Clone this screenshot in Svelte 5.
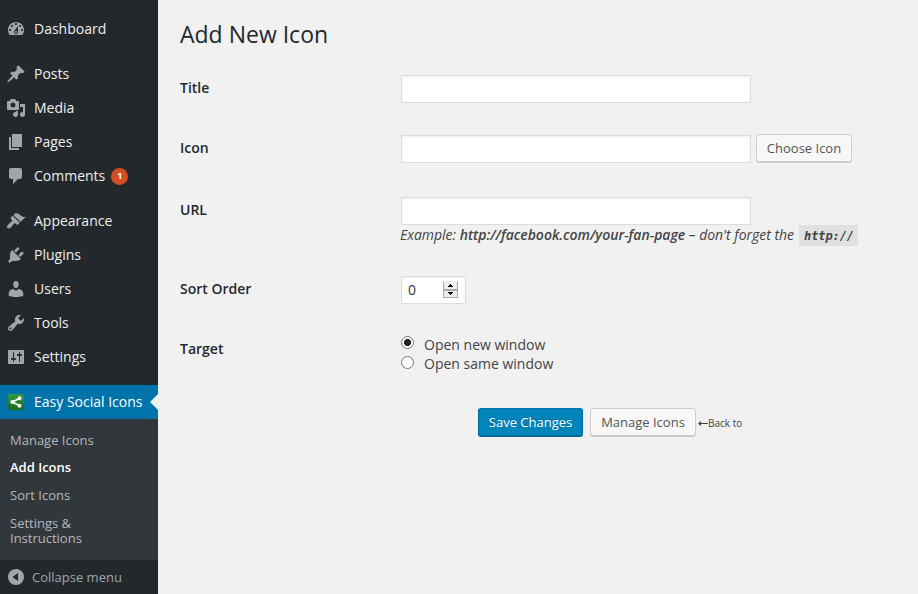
<script>
  const groups = [
    [
      { label: 'Dashboard', d: 'M3.76 16h12.48c1.09-1.37 1.76-3.11 1.76-5 0-4.42-3.58-8-8-8s-8 3.58-8 8c0 1.89.67 3.63 1.76 5zM10 4c.55 0 1 .45 1 1s-.45 1-1 1-1-.45-1-1 .45-1 1-1zM6 6c.55 0 1 .45 1 1s-.45 1-1 1-1-.45-1-1 .45-1 1-1zm8 0c.55 0 1 .45 1 1s-.45 1-1 1-1-.45-1-1 .45-1 1-1zm-5.37 5.55L12 7v6c0 1.1-.9 2-2 2s-2-.9-2-2c0-.57.24-1.08.63-1.45zM4 10c.55 0 1 .45 1 1s-.45 1-1 1-1-.45-1-1 .45-1 1-1zm12 0c.55 0 1 .45 1 1s-.45 1-1 1-1-.45-1-1 .45-1 1-1zm-5 3c0-.55-.45-1-1-1s-1 .45-1 1 .45 1 1 1 1-.45 1-1z' }
    ],
    [
      { label: 'Posts', d: 'M10.44 3.02l1.82-1.82 6.36 6.35-1.83 1.82c-1.05-.68-2.48-.57-3.41.36l-.75.75c-.92.93-1.04 2.35-.35 3.41l-1.83 1.82-2.41-2.41-2.8 2.79c-.42.42-3.38 2.71-3.8 2.29s1.86-3.39 2.28-3.81l2.79-2.79L4.1 9.36l1.83-1.82c1.05.69 2.48.57 3.4-.36l.75-.75c.93-.92 1.05-2.35.36-3.41z' },
      { label: 'Media', d: 'M13 11V4c0-.55-.45-1-1-1h-1.67L9 1H5L3.67 3H2c-.55 0-1 .45-1 1v7c0 .55.45 1 1 1h10c.55 0 1-.45 1-1zM7 4.5c1.38 0 2.5 1.12 2.5 2.5S8.38 9.5 7 9.5 4.5 8.38 4.5 7 5.62 4.5 7 4.5zM14 6h5v10.5c0 1.38-1.12 2.5-2.5 2.5S14 17.88 14 16.5s1.12-2.5 2.5-2.5c.17 0 .34.02.5.05V9h-3V6zm-4 8.05V13h2v3.5c0 1.38-1.12 2.5-2.5 2.5S7 17.88 7 16.5 8.12 14 9.5 14c.17 0 .34.02.5.05z' },
      { label: 'Pages', d: 'M6 15V2h10v13H6zm-1 1h8v2H3V5h2v11z' },
      { label: 'Comments', count: 1, d: 'M5 2h9c1.1 0 2 .9 2 2v7c0 1.1-.9 2-2 2h-2l-5 5v-5H5c-1.1 0-2-.9-2-2V4c0-1.1.9-2 2-2z' }
    ],
    [
      { label: 'Appearance', d: 'M14.48 11.06L7.41 3.99l1.5-1.5c.5-.56 2.3-.47 3.51.32 1.21.8 1.43 1.28 2.91 2.1 1.18.64 2.45 1.26 4.45.85zm-.71.71L6.7 4.7 4.93 6.47c-.39.39-.39 1.02 0 1.41l1.06 1.06c.39.39.39 1.03 0 1.42-.6.6-1.43 1.11-2.21 1.69-.35.26-.7.53-1.01.84C1.43 14.23.4 16.08 1.4 17.07c.99 1 2.84-.03 4.18-1.36.31-.31.58-.66.85-1.02.57-.78 1.08-1.61 1.69-2.21.39-.39 1.02-.39 1.41 0l1.06 1.06c.39.39 1.02.39 1.41 0z' },
      { label: 'Plugins', d: 'M13.11 4.36L9.87 7.6 8 5.73l3.24-3.24c.35-.34 1.05-.2 1.56.32.52.51.66 1.21.31 1.55zm-8 1.77l.91-1.12 9.01 9.01-1.19.84c-.71.71-2.63 1.16-3.82 1.16H6.14L4.9 17.26c-.59.59-1.54.59-2.12 0-.59-.58-.59-1.53 0-2.12l1.24-1.24v-3.88c0-1.13.4-3.19 1.09-3.89zm7.26 3.97l3.24-3.24c.34-.35 1.04-.21 1.55.31.52.51.66 1.21.31 1.55l-3.24 3.25z' },
      { label: 'Users', d: 'M10 9.25c-2.27 0-2.73-3.44-2.73-3.44C7 4.02 7.82 2 9.97 2c2.16 0 2.98 2.02 2.71 3.81 0 0-.41 3.44-2.68 3.44zm0 2.57L12.72 10c2.39 0 4.52 2.33 4.52 4.53v2.49s-3.65 1.13-7.24 1.13c-3.65 0-7.24-1.13-7.24-1.13v-2.49c0-2.25 1.94-4.48 4.47-4.48z' },
      { label: 'Tools', d: 'M16.68 9.77c-1.34 1.34-3.3 1.67-4.95.99l-5.41 6.52c-.99.99-2.59.99-3.58 0s-.99-2.59 0-3.57l6.52-5.42c-.68-1.65-.35-3.61.99-4.95 1.28-1.28 3.12-1.62 4.72-1.06l-2.89 2.89 2.82 2.82 2.86-2.87c.53 1.58.18 3.39-1.08 4.65zM3.81 16.21c.4.39 1.04.39 1.43 0 .4-.4.4-1.04 0-1.43-.39-.4-1.03-.4-1.43 0-.39.39-.39 1.03 0 1.43z' },
      { label: 'Settings', d: 'M18 16V4c0-.55-.45-1-1-1H3c-.55 0-1 .45-1 1v12c0 .55.45 1 1 1h14c.55 0 1-.45 1-1zM8 11h1c.55 0 1 .45 1 1s-.45 1-1 1H8v1.5c0 .28-.22.5-.5.5s-.5-.22-.5-.5V13H6c-.55 0-1-.45-1-1s.45-1 1-1h1V5.5c0-.28.22-.5.5-.5s.5.22.5.5V11zm5-2h-1c-.55 0-1-.45-1-1s.45-1 1-1h1V5.5c0-.28.22-.5.5-.5s.5.22.5.5V7h1c.55 0 1 .45 1 1s-.45 1-1 1h-1v5.5c0 .28-.22.5-.5.5s-.5-.22-.5-.5V9z' }
    ]
  ];
  const submenu = ['Manage Icons', 'Add Icons', 'Sort Icons', 'Settings & Instructions'];

  let sortOrder = $state(0);
  let target = $state('new');
</script>

<div class="page">
  <nav class="sidebar">
    {#each groups as group}
      <ul class="group">
        {#each group as item}
          <li class="item">
            <svg width="20" height="20" viewBox="0 0 20 20"><path fill-rule="evenodd" d={item.d} /></svg>
            <span>{item.label}</span>
            {#if item.count}<span class="count">{item.count}</span>{/if}
          </li>
        {/each}
      </ul>
    {/each}
    <div class="item current">
      <svg width="20" height="20" viewBox="0 0 20 20">
        <defs>
          <linearGradient id="leaf" x1="0" y1="0" x2="0" y2="1">
            <stop offset="0" stop-color="#37993f" />
            <stop offset="1" stop-color="#146b1d" />
          </linearGradient>
        </defs>
        <rect x="2" y="2" width="16" height="16" rx="2" fill="url(#leaf)" />
        <path d="M13.7 6.2 6.3 10l7.4 3.8" fill="none" stroke="#fff" stroke-width="1.7" />
        <circle cx="13.5" cy="6.3" r="2" fill="#fff" />
        <circle cx="6.4" cy="10" r="2" fill="#fff" />
        <circle cx="13.5" cy="13.7" r="2" fill="#fff" />
      </svg>
      <span>Easy Social Icons</span>
      <i class="notch"></i>
    </div>
    <ul class="submenu">
      {#each submenu as entry}
        <li class:active={entry === 'Add Icons'}>{entry}</li>
      {/each}
    </ul>
    <div class="collapse">
      <svg width="16" height="16" viewBox="0 0 16 16">
        <circle cx="8" cy="8" r="8" fill="#a0a5aa" />
        <path d="M10 4v8L4.5 8z" fill="#23282d" />
      </svg>
      <span>Collapse menu</span>
    </div>
  </nav>

  <main>
    <h1>Add New Icon</h1>
    <form>
      <div class="row title">
        <label for="title">Title</label>
        <div><input id="title" class="text" type="text" /></div>
      </div>
      <div class="row icon">
        <label for="icon">Icon</label>
        <div class="with-button">
          <input id="icon" class="text" type="text" />
          <button type="button" class="choose">Choose Icon</button>
        </div>
      </div>
      <div class="row url">
        <label for="url">URL</label>
        <div>
          <input id="url" class="text" type="text" />
          <p class="hint"><em>Example: <strong>http://facebook.com/your-fan-page</strong> – don't forget the</em><code>http://</code></p>
        </div>
      </div>
      <div class="row order">
        <label for="order">Sort Order</label>
        <div class="number">
          <input id="order" type="text" bind:value={sortOrder} />
          <div class="spin">
            <button type="button" aria-label="Increase" onclick={() => sortOrder++}><svg width="5" height="3" viewBox="0 0 5 3"><path d="M2 0h1v1h1v1h1v1H0V2h1V1h1z" /></svg></button>
            <button type="button" aria-label="Decrease" onclick={() => sortOrder--}><svg width="5" height="3" viewBox="0 0 5 3"><path d="M0 0h5v1H4v1H3v1H2V2H1V1H0z" /></svg></button>
          </div>
        </div>
      </div>
      <div class="row target">
        <span class="label">Target</span>
        <div class="radios">
          <label><input type="radio" value="new" bind:group={target} /><span>Open new window</span></label>
          <label><input type="radio" value="same" bind:group={target} /><span>Open same window</span></label>
        </div>
      </div>
      <div class="actions">
        <button type="button" class="primary">Save Changes</button>
        <button type="button" class="manage">Manage Icons</button>
        <span class="back"><svg width="10" height="7" viewBox="0 0 10 7"><path d="M0 3.5 3 1v2h7v1H3v2z" /></svg>Back to</span>
      </div>
    </form>
  </main>
</div>

<style>
  .page, .page * { box-sizing: border-box; }
  .page {
    display: flex;
    width: 918px;
    height: 594px;
    overflow: hidden;
    background: #f1f1f1;
    color: #444;
    font: 14px/20px "Open Sans", sans-serif;
  }
  ul { list-style: none; margin: 0; padding: 0; }
  .sidebar {
    width: 158px;
    flex: none;
    padding-top: 12px;
    background: #23282d;
  }
  .group { margin-bottom: 11px; }
  .item {
    position: relative;
    display: flex;
    align-items: center;
    height: 34px;
    padding-left: 6px;
    color: #eee;
    white-space: nowrap;
  }
  .item svg { margin-right: 8px; fill: #a0a5aa; flex: none; }
  .count {
    width: 17px;
    height: 17px;
    margin: 1px 0 0 6px;
    border-radius: 50%;
    background: #d54e21;
    color: #fff;
    font-size: 9px;
    font-weight: 700;
    line-height: 16px;
    text-align: center;
  }
  .current { background: #0073aa; color: #fff; }
  .notch {
    position: absolute;
    right: 0;
    top: 9px;
    border: 8px solid transparent;
    border-left: 0;
    border-right-color: #f1f1f1;
  }
  .submenu {
    height: 141px;
    padding: 7.5px 40px 0 10px;
    background: #32373c;
    color: #b4b9be;
    font-size: 13px;
    line-height: 15.6px;
  }
  .submenu li { padding: 6px 0; }
  .submenu li:last-child { line-height: 15px; padding-top: 6.6px; }
  .submenu .active { color: #fff; font-weight: 600; }
  .collapse {
    display: flex;
    align-items: center;
    height: 34px;
    padding-left: 8px;
    gap: 8px;
    color: #a0a5aa;
    font-size: 13px;
  }
  main { flex: 1; padding: 20px 0 0 22px; }
  h1 {
    height: 55px;
    margin: 0;
    color: #23282d;
    font-size: 23px;
    font-weight: 400;
    line-height: 29px;
  }
  .row { display: grid; grid-template-columns: 221px 1fr; }
  .row > label, .label {
    padding-top: 3px;
    color: #23282d;
    font-weight: 600;
  }
  .title { height: 60px; }
  .icon { height: 62px; }
  .url { height: 79px; }
  .order { height: 60px; }
  .target { height: 72px; }
  .text, .number {
    display: block;
    width: 350px;
    height: 28px;
    margin: 0;
    padding: 3px 5px;
    border: 1px solid #ddd;
    background: #fff;
    box-shadow: inset 0 1px 2px rgba(0, 0, 0, .07);
    outline: 0;
  }
  .with-button { display: flex; align-items: flex-start; gap: 5px; }
  button {
    height: 28px;
    margin: 0;
    padding: 0;
    border: 1px solid #ccc;
    border-radius: 3px;
    background: #f7f7f7;
    box-shadow: 0 1px 0 #ccc;
    color: #555;
    font: 13px/26px "Open Sans", sans-serif;
  }
  .choose { width: 96px; margin-top: -1px; }
  .hint {
    display: flex;
    margin: 0 0 0 -1px;
    line-height: 20px;
    white-space: nowrap;
  }
  .hint em { letter-spacing: -.02px; }
  .hint strong { font-weight: 600; }
  code {
    width: 59px;
    height: 21px;
    margin-left: 5px;
    padding-left: 5px;
    background: #e0e0e0;
    font: italic bold 12px/22px "DejaVu Sans Mono", monospace;
    letter-spacing: -.1px;
  }
  .number { display: flex; width: 65px; padding: 4px 6px 4px 6px; }
  .number input {
    width: 35px;
    height: 18px;
    padding: 0;
    border: 0;
    background: none;
    color: #32373c;
    font: 14px/18px "Open Sans", sans-serif;
    outline: 0;
  }
  .spin { display: flex; flex-direction: column; width: 15px; height: 17px; flex: none; }
  .spin button {
    display: flex;
    align-items: center;
    justify-content: center;
    width: 15px;
    height: 9px;
    border: 1px solid #aaa;
    border-radius: 0;
    background: #eee;
    box-shadow: none;
  }
  .spin button:first-child { border-top-color: #eee; }
  .radios { margin-top: -1px; }
  .radios label { display: flex; height: 20px; }
  .radios label + label { line-height: 18px; }
  .radios span { padding-left: 10px; }
  .radios input {
    appearance: none;
    width: 13px;
    height: 13px;
    margin: 1px 0 0;
    border: 1px solid #777;
    border-radius: 50%;
    background: #fff;
  }
  .radios input:checked { background: radial-gradient(circle, #222 0 3.2px, #fff 3.9px); }
  .actions { display: flex; padding-left: 298px; }
  .primary {
    width: 105px;
    border-color: #0073aa #006799 #006799;
    background: #0085ba;
    box-shadow: 0 1px 0 #006799;
    color: #fff;
    text-shadow: 0 -1px 1px #006799;
  }
  .manage { width: 106px; margin-left: 7px; }
  .back {
    display: flex;
    align-items: center;
    height: 30px;
    margin-left: 2px;
    font-size: 10px;
  }
  .back svg { fill: #444; margin-top: 1px; }
</style>
